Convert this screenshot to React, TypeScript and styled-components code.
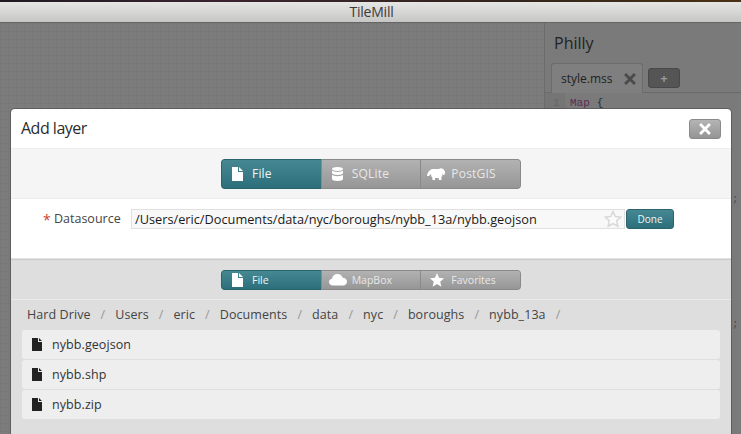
import styled, { createGlobalStyle } from 'styled-components';
import { ReactNode } from 'react';

const GlobalStyle = createGlobalStyle`
  html, body {
    margin: 0;
    height: 100%;
    overflow: hidden;
    background: #7a7a7a;
  }
  * {
    box-sizing: border-box;
  }
`;

const Window = styled.div`
  position: relative;
  width: 741px;
  height: 434px;
  overflow: hidden;
  display: flex;
  flex-direction: column;
  font-family: 'Open Sans', 'Noto Sans', sans-serif;
  color: #333;
`;

const Wallpaper = styled.div`
  height: 2px;
  background: linear-gradient(to right, #201a20, #3a2430 30%, #33261c 70%, #4a3214);
`;

const TitleBar = styled.div`
  height: 21px;
  flex: none;
  display: flex;
  align-items: center;
  justify-content: center;
  padding: 0 0 2px 2px;
  background: linear-gradient(to bottom, #e6e6e4, #c6c6c4);
  border-bottom: 1px solid #666;
  font-size: 14px;
  color: #3a3a3a;
  letter-spacing: -0.2px;
`;

const Workspace = styled.div`
  flex: 1;
  display: flex;
  min-height: 0;
`;

const MapArea = styled.div`
  width: 544px;
  flex: none;
  background-color: #7c7c7c;
  background-image:
    linear-gradient(to right, #787878 1px, transparent 1px),
    linear-gradient(to bottom, #787878 1px, transparent 1px);
  background-size: 8px 8px;
`;

const Sidebar = styled.div`
  flex: 1;
  background: #7a7a7a;
  border-left: 1px solid #6c6c6c;
  padding-top: 9px;
`;

const ProjectName = styled.div`
  font-size: 16px;
  line-height: 22px;
  padding-left: 9px;
  color: #222;
`;

const TabStrip = styled.div`
  display: flex;
  align-items: center;
  gap: 5px;
  height: 30px;
  margin-top: 9px;
  padding-left: 6px;
  border-bottom: 1px solid #6a6a6a;
`;

const EditorTab = styled.div`
  width: 92px;
  height: 30px;
  margin-bottom: -1px;
  display: flex;
  align-items: center;
  justify-content: space-between;
  padding: 0 5px 0 9px;
  background: #7f7f7f;
  border: 1px solid #6c6c6c;
  border-bottom: none;
  border-radius: 3px 3px 0 0;
  font-size: 12px;
  color: #222;
`;

const AddTab = styled.div`
  width: 32px;
  height: 20px;
  display: flex;
  align-items: center;
  justify-content: center;
  background: #555;
  border: 1px solid #484848;
  border-radius: 3px;
  font-size: 13px;
  font-weight: 700;
  color: #9a9a9a;
`;

const CodeLine = styled.div`
  display: flex;
  height: 26px;
  font-family: 'Liberation Mono', monospace;
  font-size: 11px;
  line-height: 12px;
`;

const Gutter = styled.div`
  width: 20px;
  padding: 4px 0 0 8px;
  background: #757575;
  color: #666;
`;

const CodeKeyword = styled.span`
  color: #5c2d52;
  margin: 4px 0 0 5px;
`;

const CodeBrace = styled.span`
  color: #2a2a2a;
  margin: 4px 0 0 7px;
`;

const Semicolon = styled.span<{ $top: number }>`
  position: absolute;
  left: 732px;
  top: ${({ $top }) => $top}px;
  font-family: 'Liberation Mono', monospace;
  font-size: 11px;
  line-height: 12px;
  color: #4c4c4c;
`;

const Dialog = styled.div`
  position: absolute;
  left: 11px;
  top: 109px;
  width: 720px;
  height: 340px;
  display: flex;
  flex-direction: column;
  background: #fff;
  border-radius: 4px 4px 0 0;
  box-shadow: 0 0 0 1px rgba(60, 60, 60, 0.45);
`;

const DialogHeader = styled.div`
  height: 40px;
  flex: none;
  display: flex;
  align-items: center;
  justify-content: space-between;
  padding: 0 10px;
  border-bottom: 1px solid #eee;
`;

const DialogTitle = styled.div`
  font-size: 16px;
  padding-bottom: 2px;
  color: #2b2b2b;
  letter-spacing: -0.5px;
`;

const CloseButton = styled.div`
  width: 32px;
  height: 20px;
  margin-top: 1px;
  display: flex;
  align-items: center;
  justify-content: center;
  background: linear-gradient(to bottom, #b4b4b4, #949494);
  border: 1px solid #8a8a8a;
  border-radius: 3px;
`;

const SourceBar = styled.div`
  height: 50px;
  flex: none;
  display: flex;
  align-items: center;
  justify-content: center;
  background: #f5f5f5;
  border-bottom: 1px solid #ececec;
`;

const Segmented = styled.div<{ $small?: boolean }>`
  display: flex;
  width: 300px;
  height: ${({ $small }) => ($small ? 20 : 30)}px;
  border-radius: 3px;
  overflow: hidden;
  font-size: ${({ $small }) => ($small ? 10.5 : 12)}px;
  letter-spacing: ${({ $small }) => ($small ? 0 : 0.2)}px;
`;

const Segment = styled.div<{ $active?: boolean }>`
  flex: 1;
  display: flex;
  align-items: center;
  gap: 2px;
  padding-left: 9px;
  background: ${({ $active }) =>
    $active
      ? 'linear-gradient(to bottom, #468892, #2c6e7a)'
      : 'linear-gradient(to bottom, #b2b2b2, #969696)'};
  border: 1px solid ${({ $active }) => ($active ? '#2a636e' : '#8a8a8a')};
  margin-left: -1px;
  color: ${({ $active }) => ($active ? '#f0f6f7' : '#e8e8e8')};

  &:first-child {
    margin-left: 0;
    border-radius: 3px 0 0 3px;
  }
  &:last-child {
    border-radius: 0 3px 3px 0;
  }
`;

const SegmentIcon = styled.svg<{ $shift?: number }>`
  width: 19px;
  height: 14px;
  flex: none;
  fill: #fff;
  overflow: visible;
  transform: translateX(${({ $shift }) => $shift ?? 0}px);
`;

const FormRow = styled.div`
  height: 60px;
  flex: none;
  display: flex;
  align-items: flex-start;
  padding: 10px 0 0 32px;
  border-bottom: 1px solid #e2e2e2;
  box-shadow: 0 1px 1px rgba(0, 0, 0, 0.08);
  position: relative;
`;

const FieldLabel = styled.div`
  width: 88px;
  height: 20px;
  display: flex;
  align-items: center;
  padding-bottom: 1px;
  font-size: 12.5px;
  color: #444;
`;

const RequiredMark = styled.span`
  color: #d0402c;
  font-size: 14px;
  width: 11px;
  margin-top: 2px;
`;

const PathField = styled.div`
  width: 494px;
  height: 20px;
  display: flex;
  align-items: center;
  justify-content: space-between;
  padding: 0 2px 1px 3px;
  background: #f8f8f8;
  border: 1px solid #e0e0e0;
  font-size: 12.75px;
  color: #1a1a1a;
`;

const DoneButton = styled.div`
  width: 48px;
  height: 20px;
  margin-left: 1px;
  display: flex;
  align-items: center;
  justify-content: center;
  background: linear-gradient(to bottom, #468892, #2c6e7a);
  border: 1px solid #2a636e;
  border-radius: 3px;
  font-size: 10px;
  color: #eef5f6;
`;

const Browser = styled.div`
  flex: 1;
  background: #dedede;
  padding: 11px 11px 0;
`;

const BrowserTabs = styled.div`
  display: flex;
  justify-content: center;
  padding-bottom: 9px;
  margin: 0 -11px;
  border-bottom: 1px solid #eaeaea;
`;

const Breadcrumbs = styled.div`
  height: 30px;
  display: flex;
  align-items: center;
  padding: 0 0 2px 5px;
  font-size: 12.5px;
  letter-spacing: 0.08px;
  color: #444;
`;

const Separator = styled.span`
  color: #999;
  margin: 0 10px;
`;

const FileList = styled.div`
  display: flex;
  flex-direction: column;
  gap: 1px;
`;

const FileRow = styled.div`
  height: 29px;
  display: flex;
  align-items: center;
  gap: 10px;
  padding: 0 0 1px 10px;
  background: #eee;
  border-radius: 3px;
  font-size: 12.5px;
  letter-spacing: 0.08px;
  color: #333;
`;

const FileGlyph = styled.svg`
  width: 10px;
  height: 13px;
  margin-top: 1px;
  fill: #222;
  flex: none;
`;

function PageIcon() {
  return (
    <SegmentIcon viewBox="0 0 19 14">
      <path d="M1 0h6v5h5v9H1zM8 0l4 4H8z" />
    </SegmentIcon>
  );
}

function DatabaseIcon() {
  return (
    <SegmentIcon viewBox="0 0 19 14">
      <path d="M6.500 0C9.500 0 12 .9 12 2s-2.500 2-5.500 2S1 3.100 1 2s2.500-2 5.500-2zM1 3.600c1 1 3.200 1.400 5.500 1.400s4.500-.4 5.500-1.400V6c0 1.100-2.500 2-5.500 2S1 7.100 1 6zM1 7.800c1 1 3.200 1.400 5.500 1.400s4.500-.4 5.500-1.400V12c0 1.100-2.500 2-5.500 2S1 13.100 1 12z" />
    </SegmentIcon>
  );
}

function ElephantIcon() {
  return (
    <SegmentIcon viewBox="0 0 19 14" $shift={-3}>
      <path d="M5 2h7c1-1 3-1 4 0 1 .5 2 2 2 4 0 1-.5 1.500-1 2h-1v-.8c0-.6-.6-.6-.6 0 0 1 0 2-1 2.800V13h-2.600v-2H8v2H5.400v-2.500C4.500 10 4 8.500 4 7 3.200 7.500 2.500 8 2.200 9H0c.3-2 1-5 5-7z" />
    </SegmentIcon>
  );
}

function CloudIcon() {
  return (
    <SegmentIcon viewBox="0 0 19 14" $shift={-2}>
      <path d="M4 12.500C1.800 12.500 0 11 0 9c0-1.800 1.200-3 3-3.300C3.400 3 5.500 1 8.500 1c2.500 0 4.500 1.500 5.200 3.700C16.500 4.800 18 6.500 18 8.700c0 2.200-1.800 3.800-4 3.800z" />
    </SegmentIcon>
  );
}

function StarIcon() {
  return (
    <SegmentIcon viewBox="0 0 19 14">
      <path d="M7 0l2 4.800 5 .5-3.800 3.400 1.200 5.100L7 11.100l-4.400 2.700 1.200-5.100L0 5.300l5-.5z" />
    </SegmentIcon>
  );
}

function Cross({ size, color }: { size: number; color: string }) {
  return (
    <svg width={size} height={size} viewBox="0 0 10 10">
      <path d="M1.500 1.500l7 7M8.500 1.500l-7 7" stroke={color} strokeWidth="2" />
    </svg>
  );
}

function FavoriteStar() {
  return (
    <svg width="18" height="18" viewBox="0 0 18 18">
      <path
        d="M9 1.500l2.300 5 5.400.6-4 3.700 1.100 5.400L9 13.500l-4.800 2.700 1.100-5.400-4-3.700 5.400-.6z"
        fill="#fafafa"
        stroke="#d8d8d8"
        strokeWidth="1.500"
      />
    </svg>
  );
}

const crumbs = ['Hard Drive', 'Users', 'eric', 'Documents', 'data', 'nyc', 'boroughs', 'nybb_13a'];
const files = ['nybb.geojson', 'nybb.shp', 'nybb.zip'];

function SegmentButton({ icon, label, active }: { icon: ReactNode; label: string; active?: boolean }) {
  return (
    <Segment $active={active}>
      {icon}
      {label}
    </Segment>
  );
}

export default function App() {
  return (
    <Window>
      <GlobalStyle />
      <Wallpaper />
      <TitleBar>TileMill</TitleBar>
      <Workspace>
        <MapArea />
        <Sidebar>
          <ProjectName>Philly</ProjectName>
          <TabStrip>
            <EditorTab>
              style.mss
              <Cross size={14} color="#4a4a4a" />
            </EditorTab>
            <AddTab>+</AddTab>
          </TabStrip>
          <CodeLine>
            <Gutter>1</Gutter>
            <CodeKeyword>Map</CodeKeyword>
            <CodeBrace>{'{'}</CodeBrace>
          </CodeLine>
        </Sidebar>
      </Workspace>
      <Semicolon $top={193}>;</Semicolon>
      <Semicolon $top={318}>;</Semicolon>

      <Dialog>
        <DialogHeader>
          <DialogTitle>Add layer</DialogTitle>
          <CloseButton>
            <Cross size={14} color="#fff" />
          </CloseButton>
        </DialogHeader>
        <SourceBar>
          <Segmented>
            <SegmentButton icon={<PageIcon />} label="File" active />
            <SegmentButton icon={<DatabaseIcon />} label="SQLite" />
            <SegmentButton icon={<ElephantIcon />} label="PostGIS" />
          </Segmented>
        </SourceBar>
        <FormRow>
          <FieldLabel>
            <RequiredMark>*</RequiredMark>
            Datasource
          </FieldLabel>
          <PathField>
            /Users/eric/Documents/data/nyc/boroughs/nybb_13a/nybb.geojson
            <FavoriteStar />
          </PathField>
          <DoneButton>Done</DoneButton>
        </FormRow>
        <Browser>
          <BrowserTabs>
            <Segmented $small>
              <SegmentButton icon={<PageIcon />} label="File" active />
              <SegmentButton icon={<CloudIcon />} label="MapBox" />
              <SegmentButton icon={<StarIcon />} label="Favorites" />
            </Segmented>
          </BrowserTabs>
          <Breadcrumbs>
            {crumbs.map((crumb) => (
              <span key={crumb}>
                {crumb}
                <Separator>/</Separator>
              </span>
            ))}
          </Breadcrumbs>
          <FileList>
            {files.map((file) => (
              <FileRow key={file}>
                <FileGlyph viewBox="0 0 10 13">
                  <path d="M0 0h6v4h4v9H0zM7 0l3 3H7z" />
                </FileGlyph>
                {file}
              </FileRow>
            ))}
          </FileList>
        </Browser>
      </Dialog>
    </Window>
  );
}
